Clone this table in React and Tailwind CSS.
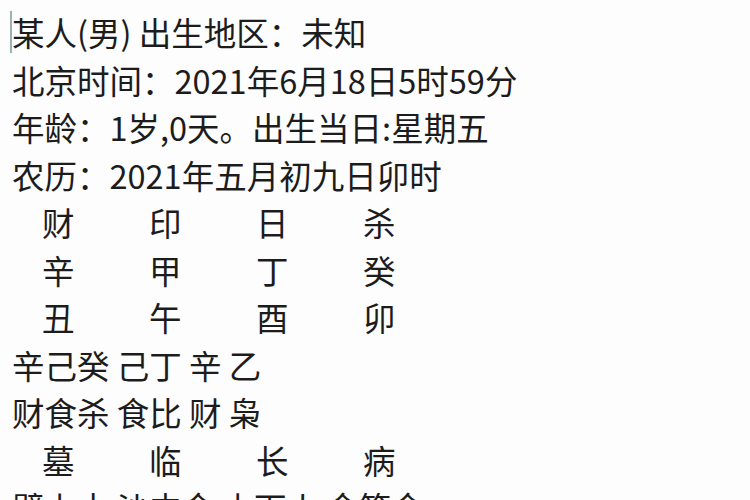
const font = { fontFamily: '"Noto Sans CJK SC", "Noto Sans", sans-serif' };

const grid = [
  ['财', '印', '日', '杀'],
  ['辛', '甲', '丁', '癸'],
  ['丑', '午', '酉', '卯'],
];

function Cols({ items }) {
  return (
    <div className="grid grid-cols-[107px_107px_107px_107px] pl-[30px]">
      {items.map((c, i) => (
        <span key={i}>{c}</span>
      ))}
    </div>
  );
}

export default function App() {
  return (
    <div
      className="w-[750px] h-[500px] overflow-hidden bg-[#fdfdfd] text-[#1c1c1c] text-[32.5px] leading-[47.5px] pt-[8px] pl-[12px]"
      style={font}
    >
      <div className="flex items-center">
        <span className="w-[2px] h-[42px] bg-[#9ab3b0] -ml-[2px]" />
        <span>某人(男) 出生地区：未知</span>
      </div>
      <div>北京时间：2021年6月18日5时59分</div>
      <div>年龄：1岁,0天。出生当日:星期五</div>
      <div>农历：2021年五月初九日卯时</div>
      {grid.map((row, i) => (
        <Cols key={i} items={row} />
      ))}
      <div>辛己癸 己丁 辛 乙</div>
      <div>财食杀 食比 财 枭</div>
      <Cols items={['墓', '临', '长', '病']} />
      <div>壁上土 沙中金 山下火 金箔金</div>
    </div>
  );
}
